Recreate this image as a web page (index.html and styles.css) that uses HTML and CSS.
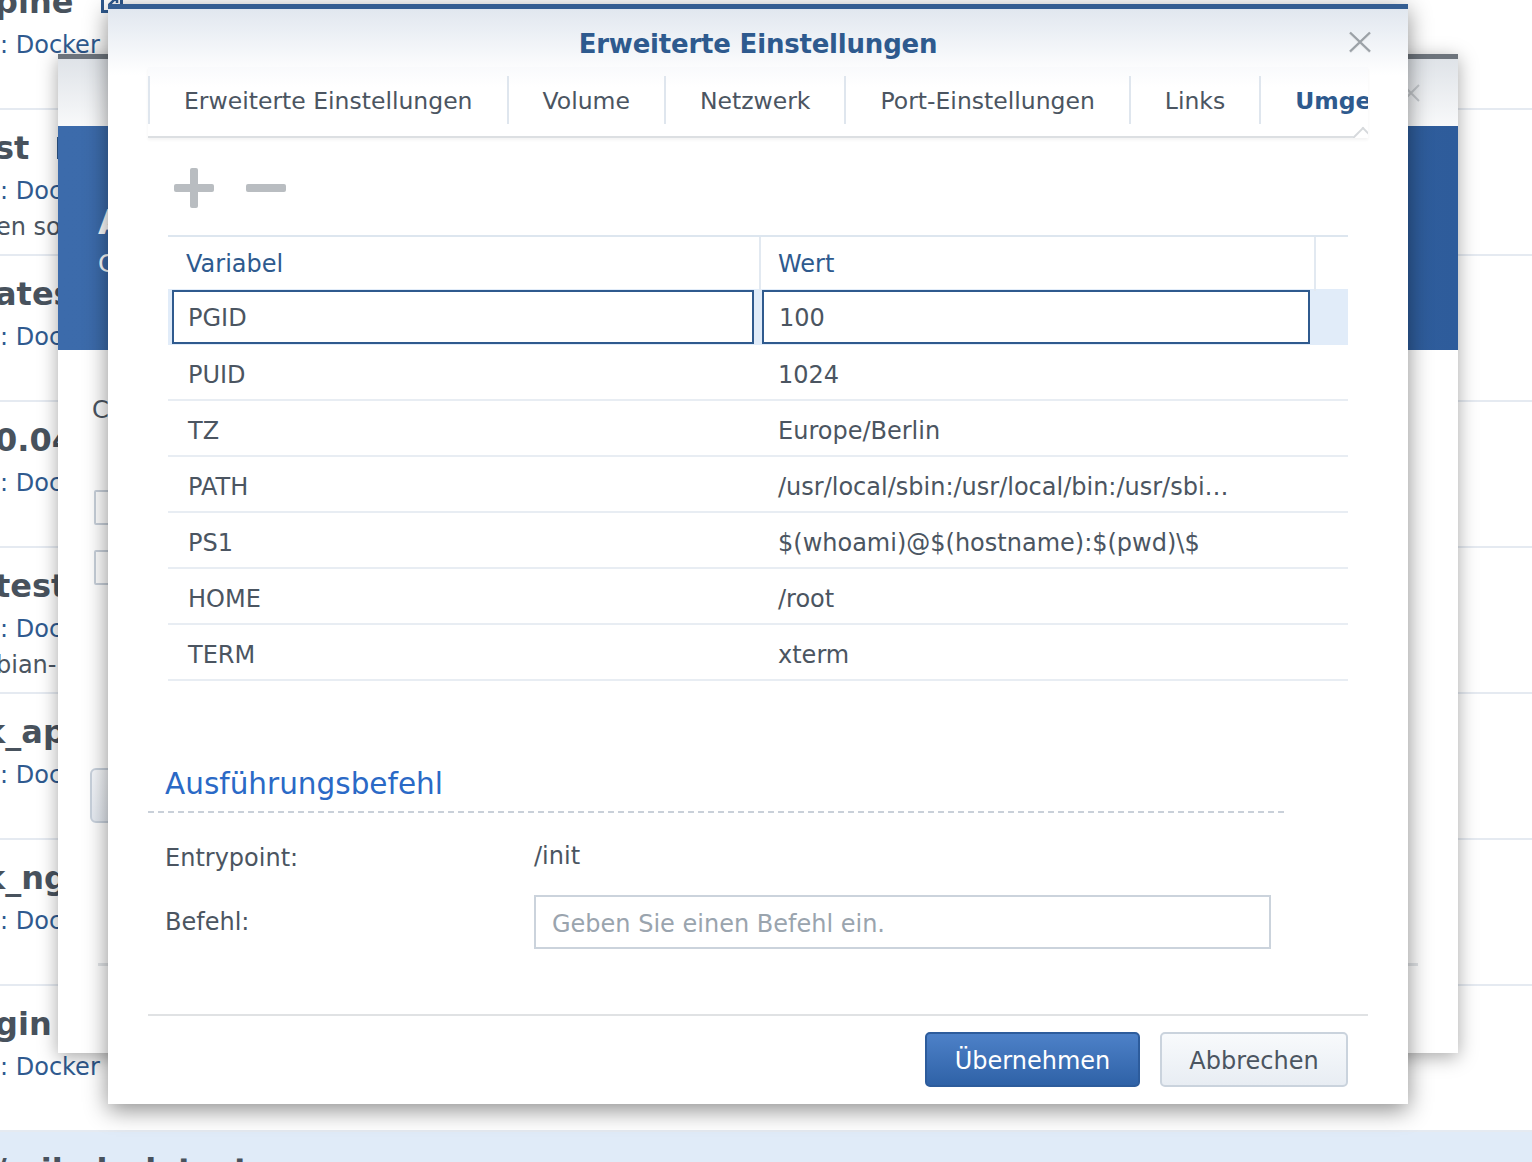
FILE: index.html
```html
<!DOCTYPE html>
<html lang="de">
<head>
<meta charset="utf-8">
<title>Erweiterte Einstellungen</title>
<link rel="stylesheet" href="styles.css">
</head>
<body>
<main class="page">
  <ul class="list">
    <li class="item">
      <div class="item-title"><span>pine</span><svg class="ext" viewBox="0 0 22 22"><rect x="1.5" y="1.5" width="19" height="19" fill="none" stroke="#2f5a8f" stroke-width="3"/><path d="M8 14 L16 6 M10 6 H16 V12" fill="none" stroke="#2f5a8f" stroke-width="2.5"/></svg></div>
      <div class="item-src">: Docker</div>
    </li>
    <li class="item">
      <div class="item-title"><span>st</span><svg class="ext" viewBox="0 0 22 22"><rect x="1.5" y="1.5" width="19" height="19" fill="none" stroke="#2f5a8f" stroke-width="3"/><path d="M8 14 L16 6 M10 6 H16 V12" fill="none" stroke="#2f5a8f" stroke-width="2.5"/></svg></div>
      <div class="item-src">: Docker</div>
      <div class="item-desc">en source</div>
    </li>
    <li class="item">
      <div class="item-title"><span>ates</span></div>
      <div class="item-src">: Docker</div>
    </li>
    <li class="item">
      <div class="item-title"><span>0.04</span></div>
      <div class="item-src">: Docker</div>
    </li>
    <li class="item">
      <div class="item-title"><span>test</span></div>
      <div class="item-src">: Docker</div>
      <div class="item-desc">bian-</div>
    </li>
    <li class="item">
      <div class="item-title item-title-cut"><span>k_ap</span></div>
      <div class="item-src">: Docker</div>
    </li>
    <li class="item">
      <div class="item-title item-title-cut"><span>k_ng</span></div>
      <div class="item-src">: Docker</div>
    </li>
    <li class="item">
      <div class="item-title"><span>gin</span></div>
      <div class="item-src">: Docker</div>
    </li>
    <li class="item item-sel">
      <div class="item-title"><span>/ pihole_latest</span></div>
    </li>
  </ul>
</main>

<section class="dlg dlg-mid">
  <div class="mid-head">
    <svg class="mid-close" viewBox="0 0 18 18"><path d="M1 1 L17 17 M17 1 L1 17" stroke="#c4c8cc" stroke-width="2"/></svg>
  </div>
  <div class="mid-banner">
    <h2 class="mid-banner-title">Allgemeine Einstellungen</h2>
    <p class="mid-banner-sub">Container erstellen</p>
  </div>
  <div class="mid-body">
    <p class="mid-label">Containername</p>
    <div class="mid-check mid-check-first"></div>
    <div class="mid-check"></div>
    <div class="mid-btn"></div>
  </div>
  <div class="mid-foot"></div>
</section>

<section class="dlg dlg-front">
  <header class="head">
    <h1 class="title">Erweiterte Einstellungen</h1>
    <svg class="close" viewBox="0 0 24 22"><path d="M2 1.5 L22 20.5 M22 1.5 L2 20.5" stroke="#e8eaec" stroke-width="2.6" transform="translate(0 1)"/><path d="M2 1.5 L22 20.5 M22 1.5 L2 20.5" stroke="#9ba1a7" stroke-width="2.4"/></svg>
  </header>

  <nav class="tabs-wrap">
    <div class="tabs">
      <div class="tab">Erweiterte Einstellungen</div>
      <div class="tab">Volume</div>
      <div class="tab">Netzwerk</div>
      <div class="tab">Port-Einstellungen</div>
      <div class="tab">Links</div>
      <div class="tab tab-active">Umgebung</div>
    </div>
    <div class="notch"></div>
  </nav>

  <div class="body">
    <div class="toolbar">
      <svg class="tool" width="40" height="40" viewBox="0 0 40 40"><rect x="16" y="0" width="8" height="40" rx="2" fill="#b9bdc1"/><rect x="0" y="16" width="40" height="8" rx="2" fill="#b9bdc1"/></svg>
      <svg class="tool" width="40" height="40" viewBox="0 0 40 40"><rect x="0" y="16" width="40" height="8" rx="2" fill="#b9bdc1"/></svg>
    </div>

    <div class="grid">
      <div class="grid-head">
        <div class="gh">Variabel</div>
        <div class="gh gh-sep">Wert</div>
        <div class="gh gh-sep"></div>
      </div>
      <div class="row-edit">
        <div class="editor editor-key">PGID</div>
        <div class="editor editor-val">100</div>
      </div>
      <div class="row"><span class="c-key">PUID</span><span class="c-val">1024</span></div>
      <div class="row"><span class="c-key">TZ</span><span class="c-val">Europe/Berlin</span></div>
      <div class="row"><span class="c-key">PATH</span><span class="c-val">/usr/local/sbin:/usr/local/bin:/usr/sbin:/usr/bin:/sbin:/bin</span></div>
      <div class="row"><span class="c-key">PS1</span><span class="c-val">$(whoami)@$(hostname):$(pwd)\$</span></div>
      <div class="row"><span class="c-key">HOME</span><span class="c-val">/root</span></div>
      <div class="row"><span class="c-key">TERM</span><span class="c-val">xterm</span></div>
    </div>

    <div class="cmd">
      <h2 class="cmd-title">Ausführungsbefehl</h2>
      <div class="dash"></div>
      <div class="form">
        <div class="f-label f-first">Entrypoint:</div>
        <div class="f-value f-first">/init</div>
        <div class="f-label">Befehl:</div>
        <input class="f-input" type="text" placeholder="Geben Sie einen Befehl ein.">
      </div>
    </div>
  </div>

  <footer class="foot">
    <button class="btn btn-primary" type="button">Übernehmen</button>
    <button class="btn btn-default" type="button">Abbrechen</button>
  </footer>
</section>
</body>
</html>
```

FILE: styles.css
```css
* { box-sizing: border-box; }
html, body { margin: 0; padding: 0; }
body {
  width: 1532px;
  height: 1162px;
  overflow: hidden;
  position: relative;
  background: #fff;
  font-family: "DejaVu Sans", Verdana, "Noto Sans", sans-serif;
  font-size: 24px;
  color: #4b5561;
}

/* ---------- background list ---------- */
.page { width: 100%; }
.list { list-style: none; margin: -36px 0 0; padding: 0; }
.item {
  height: 146px;
  border-bottom: 2px solid #e5eaf1;
  padding-top: 18px;
  overflow: hidden;
}
.item-sel { background: #e0ebf8; border-bottom: 0; }
.item-title {
  display: flex;
  align-items: center;
  gap: 28px;
  margin-left: -5px;
  height: 40px;
  font-size: 32px;
  font-weight: 700;
  line-height: 40px;
  white-space: nowrap;
  color: #48525d;
}
.item-title-cut { margin-left: -16px; }
.ext { flex: none; width: 22px; height: 22px; }
.item-src { margin-top: 5px; line-height: 36px; color: #2f5a8f; white-space: nowrap; }
.item-desc { line-height: 36px; font-size: 24px; margin-left: -4px; white-space: nowrap; }

/* ---------- dialogs ---------- */
.dlg {
  position: absolute;
  background: #fff;
  display: flex;
  flex-direction: column;
}

/* middle (background) dialog */
.dlg-mid {
  left: 58px;
  top: 54px;
  width: 1400px;
  height: 999px;
  border-top: 5px solid #6d747c;
  box-shadow: 0 4px 18px rgba(0, 0, 0, .35);
}
.mid-head {
  flex: none;
  height: 67px;
  position: relative;
  background: linear-gradient(#dfe3e8, #f8f9fa);
}
.mid-close { position: absolute; right: 38px; top: 25px; width: 18px; height: 18px; }
.mid-banner {
  flex: none;
  height: 224px;
  padding: 74px 0 0 40px;
  color: #fff;
  background:
    linear-gradient(215deg, transparent 0 62%, rgba(20, 50, 100, .25) 62% 72%, transparent 72%),
    linear-gradient(90deg, #3c6bab 0%, #3767a8 60%, #2e5c9b 100%);
}
.mid-banner-title { margin: 0; font-size: 34px; line-height: 44px; font-weight: 700; white-space: nowrap; }
.mid-banner-sub { margin: 3px 0 0; font-size: 25px; line-height: 34px; white-space: nowrap; }
.mid-body { flex: 1; padding: 42px 0 0 34px; }
.mid-label { margin: 0; line-height: 36px; white-space: nowrap; }
.mid-check {
  width: 34px;
  height: 35px;
  border: 2px solid #c8d0da;
  border-radius: 2px;
  margin: 25px 0 0 2px;
}
.mid-check-first { margin-top: 62px; }
.mid-btn {
  margin: 183px 0 0 -2px;
  width: 160px;
  height: 55px;
  border: 2px solid #c9d2dd;
  border-radius: 6px;
  background: linear-gradient(#f6f8fb, #e6ebf2);
}
.mid-foot { flex: none; height: 3px; background: #e2e5e8; margin: 0 40px 87px; }

/* front dialog */
.dlg-front {
  left: 108px;
  top: 4px;
  width: 1300px;
  height: 1100px;
  border-top: 5px solid #355e92;
  background: linear-gradient(#e1e7ef, #fff 66px) no-repeat, #fff;
  box-shadow: 0 6px 22px rgba(0, 0, 0, .45);
}
.head {
  flex: none;
  height: 58px;
  padding-top: 12px;
  position: relative;
  text-align: center;
}
.title {
  margin: 0;
  font-size: 26px;
  line-height: 46px;
  font-weight: 700;
  color: #2e5a8e;
  letter-spacing: -0.2px;
}
.close { position: absolute; right: 36px; top: 22px; width: 24px; height: 22px; }

.tabs-wrap {
  flex: none;
  position: relative;
  margin: 0 40px;
  height: 71px;
  border-bottom: 2px solid #dcdfe2;
  box-shadow: 0 2px 3px rgba(0, 0, 0, .05);
  background: linear-gradient(#f9fafc, #fff 20px);
}
.tabs { display: flex; height: 69px; overflow: hidden; padding-top: 9px; }
.tab {
  flex: none;
  height: 48px;
  line-height: 50px;
  padding: 0 34px;
  border-left: 2px solid #dfe6ee;
  font-size: 23.5px;
  color: #4b5561;
  white-space: nowrap;
}
.tab-active { font-weight: 700; color: #2e5a8e; }
.notch {
  position: absolute;
  right: 0;
  bottom: -2px;
  width: 22px;
  height: 12px;
  overflow: hidden;
}
.notch::before {
  content: "";
  position: absolute;
  left: 9px;
  top: 4px;
  width: 14px;
  height: 14px;
  background: #fff;
  border-left: 2px solid #d6d9dc;
  border-top: 2px solid #d6d9dc;
  transform: rotate(45deg);
}

.body { flex: none; padding: 0 60px; }
.toolbar { display: flex; gap: 32px; margin: 30px 0 0 6px; height: 40px; align-items: center; }
.tool { display: block; }

.grid { margin-top: 27px; border-top: 2px solid #dde6ef; }
.grid-head { display: grid; grid-template-columns: 591px 555px 34px; height: 52px; }
.gh { line-height: 54px; color: #2e5a8e; padding-left: 18px; }
.gh-sep { border-left: 2px solid #e2e9f1; padding-left: 17px; }

.row-edit {
  display: flex;
  height: 56px;
  padding: 1px 0 1px 4px;
  background: #e1ecf9;
}
.editor {
  height: 54px;
  border: 2px solid #2f5a8e;
  background: #fff;
  line-height: 52px;
  white-space: nowrap;
}
.editor-key { width: 582px; padding-left: 14px; margin-right: 8px; }
.editor-val { width: 548px; padding-left: 15px; }

.row {
  display: grid;
  grid-template-columns: 591px 480px;
  height: 56px;
  padding-top: 4px;
  border-bottom: 2px solid #e8edf3;
}
.row > span { line-height: 52px; white-space: nowrap; overflow: hidden; text-overflow: ellipsis; }
.c-key { padding-left: 20px; }
.c-val { padding-left: 19px; }

.cmd { margin: 0 -20px; }
.cmd-title {
  margin: 82px 0 0;
  padding: 0 0 6px 17px;
  font-size: 29.5px;
  line-height: 42px;
  font-weight: 400;
  color: #2a69c6;
  white-space: nowrap;
}
.dash {
  width: 1140px;
  height: 2px;
  background: repeating-linear-gradient(90deg, #c9d0d9 0 6px, transparent 6px 10px);
}
.form {
  display: grid;
  grid-template-columns: 369px 737px;
  row-gap: 16px;
  margin: 24px 0 0 17px;
  align-items: center;
}
.f-label, .f-value { line-height: 42px; white-space: nowrap; }
.f-value { margin-top: -4px; }
.f-input {
  height: 54px;
  width: 737px;
  border: 2px solid #cbd3dc;
  border-radius: 0;
  padding: 4px 16px 0;
  font-family: inherit;
  font-size: 24px;
  color: #4b5561;
  background: #fff;
  outline: none;
}
.f-input::placeholder { color: #9aa4ae; opacity: 1; }

.foot {
  margin: auto 40px 0;
  border-top: 2px solid #e0e2e4;
  padding: 16px 20px 17px;
  display: flex;
  justify-content: flex-end;
  gap: 20px;
}
.btn {
  height: 55px;
  border-radius: 5px;
  font-family: inherit;
  font-size: 24px;
  padding: 3px 0 0;
  cursor: pointer;
}
.btn-primary {
  width: 215px;
  border: 2px solid #2d5c9c;
  background: linear-gradient(#4d81c8, #2f62a7);
  color: #fff;
}
.btn-default {
  width: 188px;
  border: 2px solid #cad3dd;
  background: linear-gradient(#f8fafc, #e8edf3);
  color: #4b5561;
}
```
